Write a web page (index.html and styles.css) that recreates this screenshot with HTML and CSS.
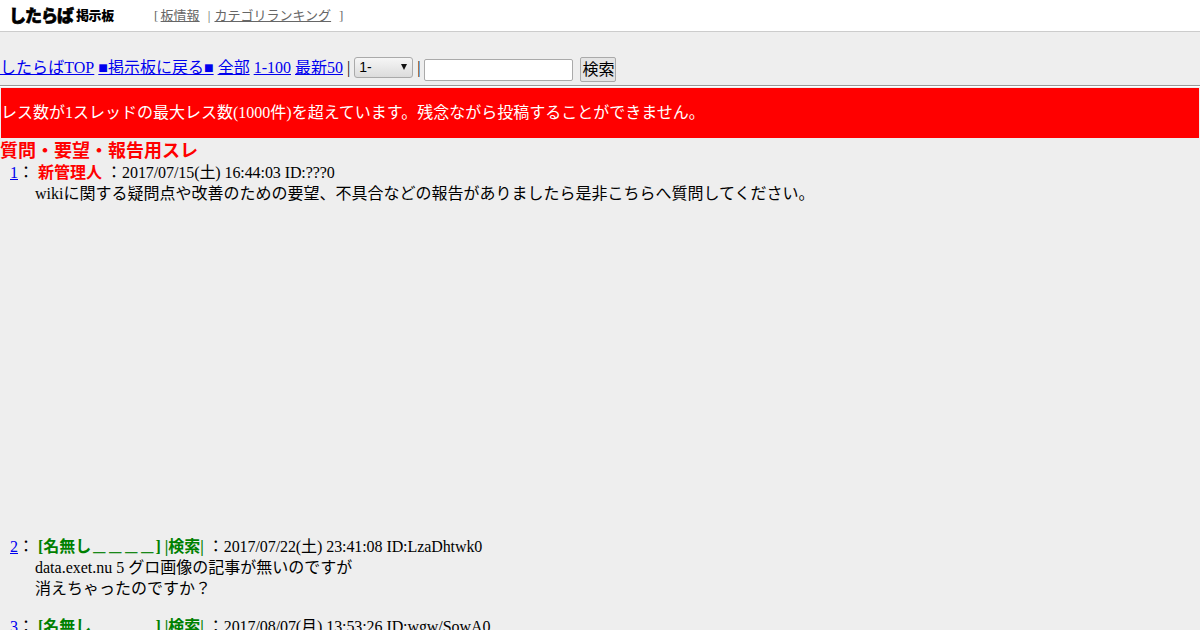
FILE: index.html
```html
<!DOCTYPE html>
<html lang="ja">
<head>
<meta charset="utf-8">
<title>質問・要望・報告用スレ</title>
<link rel="stylesheet" href="styles.css">
</head>
<body>
<header class="top">
  <a class="logo"><span class="logo-main">したらば</span><span class="logo-sub">掲示板</span></a>
  <div class="top-links">[ <a href="#">板情報</a> <span class="sep">|</span><a href="#">カテゴリランキング</a><span class="close">]</span></div>
</header>
<nav class="nav">
  <a class="home" href="#">したらばTOP</a> <a href="#">■掲示板に戻る■</a> <a href="#">全部</a> <a href="#">1-100</a> <a href="#">最新50</a> | <span class="select"><span>1-</span><i></i></span> | <input class="search" type="text"> <button class="btn">検索</button>
</nav>
<hr class="rule">
<div class="notice">レス数が1スレッドの最大レス数(1000件)を超えています。残念ながら投稿することができません。</div>
<h1 class="title">質問・要望・報告用スレ</h1>
<dl class="posts">
  <dt class="head"><a href="#">1</a>： <b class="admin">新管理人</b> ：<span class="meta">2017/07/15(土) 16:44:03 ID:???0</span></dt>
  <dd class="body tall">wikiに関する疑問点や改善のための要望、不具合などの報告がありましたら是非こちらへ質問してください。</dd>
  <dt class="head"><a href="#">2</a>： <b class="anon">[名無し<span class="bars">＿＿＿＿</span>] |検索|</b> ：<span class="meta">2017/07/22(土) 23:41:08 ID:LzaDhtwk0</span></dt>
  <dd class="body">data.exet.nu 5 グロ画像の記事が無いのですが<br>消えちゃったのですか？</dd>
  <dt class="head"><a href="#">3</a>： <b class="anon">[名無し<span class="bars">＿＿＿＿</span>] |検索|</b> ：<span class="meta">2017/08/07(月) 13:53:26 ID:wgw/SowA0</span></dt>
</dl>
</body>
</html>
```
FILE: styles.css
```css
html, body { margin: 0; height: 630px; overflow: hidden; }
body {
  background: #eeeeee;
  color: #000;
  font: 16px/21px "Liberation Serif", "Noto Sans CJK JP", serif;
}
a { color: #0000ee; text-decoration: underline; }
.top {
  height: 31px;
  background: #fff;
  border-bottom: 1px solid #cccccc;
  display: flex;
  align-items: center;
}
.logo { width: 154px; padding: 0 0 1px 9px; box-sizing: border-box; display: flex; align-items: center; gap: 3px; color: #000; text-decoration: none; font-family: "Noto Sans CJK JP", sans-serif; }
.logo-main { font-size: 17px; font-weight: 900; letter-spacing: -1px; line-height: 20px; -webkit-text-stroke: 0.6px #000; }
.logo-sub { font-size: 13px; font-weight: 900; line-height: 20px; letter-spacing: -0.4px; }
.top-links { font-size: 13px; color: #666; line-height: 18px; letter-spacing: 0; word-spacing: -1px; }
.top-links a { color: #666; }
.sep { margin: 0 4px 0 6px; }
.close { margin-left: 8px; }
.nav { margin-top: 25px; height: 28px; line-height: 22px; white-space: nowrap; display: block; }
.home { letter-spacing: 0.05px; }
.select {
  display: inline-block;
  position: relative;
  box-sizing: border-box;
  width: 59px; height: 21px;
  border: 1px solid #aaa;
  border-radius: 3px;
  background: linear-gradient(#f6f6f6, #dcdcdc);
  font: 14px/19px "Liberation Sans", sans-serif;
  padding-left: 4px;
  vertical-align: 1px;
}
.select i {
  position: absolute; right: 5px; top: 6px;
  border-left: 3px solid transparent;
  border-right: 3px solid transparent;
  border-top: 6px solid #111;
}
.search {
  box-sizing: border-box;
  width: 149px; height: 22px;
  border: 1px solid #aaa;
  border-radius: 2px;
  background: #fff;
  padding: 0;
  margin: 0;
  vertical-align: -1px;
}
.btn {
  box-sizing: border-box;
  height: 25px; width: 36px;
  margin: 0 0 0 3px;
  padding: 0;
  border: 1px solid #aaa;
  border-radius: 2px;
  background: #e4e4e4;
  color: #000;
  font: 16px/21px "Liberation Serif", "Noto Sans CJK JP", serif;
  vertical-align: -2px;
}
.rule { margin: 0 0 1px; height: 0; border: 0; border-top: 1px solid #999; border-bottom: 1px solid #fff; }
.notice {
  margin: 0 1px;
  height: 50px;
  box-sizing: border-box;
  background: #ff0000;
  color: #fff;
  line-height: 50px;
}
.title { margin: 3px 0 0; font-size: 18px; line-height: 21px; font-weight: bold; color: #ff0000; }
.posts { margin: 0; }
.head { padding-left: 10px; height: 21px; }
.body { margin: 0 0 17px 35px; }
.body.tall { height: 332px; margin-bottom: 21px; }
.admin { color: #ff0000; }
.anon { color: #008000; }
.meta { letter-spacing: -0.08px; }
.bars { font-size: 12px; letter-spacing: 4px; margin: 0 -2px 0 2px; -webkit-text-stroke: 0.5px #008000; }
```
